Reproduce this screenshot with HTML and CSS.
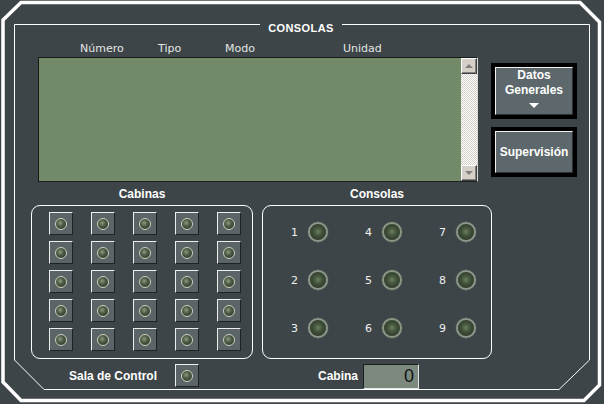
FILE: index.html
```html
<!DOCTYPE html>
<html lang="es">
<head>
<meta charset="utf-8">
<title>Consolas</title>
<link rel="stylesheet" href="styles.css">
</head>
<body>
<div class="screen">
  <svg class="frame" width="604" height="404" viewBox="0 0 604 404" aria-hidden="true">
    <polygon points="21,2.5 580,2.5 599.5,22 599.5,385 584,400.5 21,400.5 3,382 3,20" fill="none" stroke="#ffffff" stroke-width="3.5"/>
    <polygon points="14.5,24.5 589.5,24.5 589.5,360 559,389.5 44,389.5 14.5,360" fill="none" stroke="#ffffff" stroke-width="1"/>
  </svg>
  <div class="content">
    <div class="title-row"><span class="title">CONSOLAS</span></div>
    <div class="headers">
      <span class="h-num">Número</span><span class="h-tipo">Tipo</span><span class="h-modo">Modo</span><span>Unidad</span>
    </div>
    <div class="main">
      <div class="list">
        <div class="list-body"></div>
        <div class="scrollbar">
          <div class="sb-btn"><span class="arr-up"></span></div>
          <div class="sb-track"></div>
          <div class="sb-btn"><span class="arr-down"></span></div>
        </div>
      </div>
      <div class="side">
        <div class="btn-outer">
          <div class="btn btn-datos">Datos<br>Generales<span class="tri"></span></div>
        </div>
        <div class="btn-outer">
          <div class="btn btn-sup">Supervisión</div>
        </div>
      </div>
    </div>
    <div class="panels">
      <div class="panel panel-cab">
        <div class="panel-label">Cabinas</div>
        <div class="box cab-box">
          <div class="cab"><span class="led"></span></div><div class="cab"><span class="led"></span></div><div class="cab"><span class="led"></span></div><div class="cab"><span class="led"></span></div><div class="cab"><span class="led"></span></div>
          <div class="cab"><span class="led"></span></div><div class="cab"><span class="led"></span></div><div class="cab"><span class="led"></span></div><div class="cab"><span class="led"></span></div><div class="cab"><span class="led"></span></div>
          <div class="cab"><span class="led"></span></div><div class="cab"><span class="led"></span></div><div class="cab"><span class="led"></span></div><div class="cab"><span class="led"></span></div><div class="cab"><span class="led"></span></div>
          <div class="cab"><span class="led"></span></div><div class="cab"><span class="led"></span></div><div class="cab"><span class="led"></span></div><div class="cab"><span class="led"></span></div><div class="cab"><span class="led"></span></div>
          <div class="cab"><span class="led"></span></div><div class="cab"><span class="led"></span></div><div class="cab"><span class="led"></span></div><div class="cab"><span class="led"></span></div><div class="cab"><span class="led"></span></div>
        </div>
      </div>
      <div class="panel panel-con">
        <div class="panel-label">Consolas</div>
        <div class="box con-box">
          <div class="con"><span class="num">1</span><span class="led-big"></span></div>
          <div class="con"><span class="num">4</span><span class="led-big"></span></div>
          <div class="con"><span class="num">7</span><span class="led-big"></span></div>
          <div class="con"><span class="num">2</span><span class="led-big"></span></div>
          <div class="con"><span class="num">5</span><span class="led-big"></span></div>
          <div class="con"><span class="num">8</span><span class="led-big"></span></div>
          <div class="con"><span class="num">3</span><span class="led-big"></span></div>
          <div class="con"><span class="num">6</span><span class="led-big"></span></div>
          <div class="con"><span class="num">9</span><span class="led-big"></span></div>
        </div>
      </div>
    </div>
    <div class="bottom">
      <span class="sala">Sala de Control</span>
      <div class="cab"><span class="led"></span></div>
      <span class="cabina-label">Cabina</span>
      <div class="cabina-input">0</div>
    </div>
  </div>
</div>
</body>
</html>
```

FILE: styles.css
```css
html, body {
  margin: 0;
  padding: 0;
  background: #3d4548;
}

.screen {
  position: relative;
  width: 604px;
  height: 404px;
  overflow: hidden;
  background: #3d4548;
  color: #ffffff;
  font-family: "Liberation Sans", Arial, sans-serif;
}

.frame {
  position: absolute;
  left: 0;
  top: 0;
}

.content {
  position: relative;
  z-index: 1;
  display: flex;
  flex-direction: column;
  padding-top: 18px;
}

.title-row {
  height: 14px;
  text-align: center;
  padding-right: 2px;
}

.title {
  display: inline-block;
  padding: 0 8px;
  background: #3d4548;
  font-size: 11px;
  font-weight: bold;
  letter-spacing: 0.4px;
  line-height: 14px;
}

.headers {
  display: flex;
  margin-top: 10px;
  margin-left: 80px;
  height: 13px;
  font-family: "DejaVu Sans", sans-serif;
  font-size: 11px;
  line-height: 13px;
  color: #e4e6e6;
}

.h-num { width: 78px; }
.h-tipo { width: 67px; }
.h-modo { width: 118px; }

.main {
  display: flex;
  margin-top: 2px;
  margin-left: 38px;
}

.list {
  display: flex;
  width: 438px;
  height: 123px;
  border-top: 1px solid #161b1a;
  border-left: 1px solid #161b1a;
  border-bottom: 1px solid #1c2120;
  border-right: 1px solid #d8d8d8;
}

.list-body {
  flex: 1;
  background: #728a68;
}

.scrollbar {
  width: 16px;
  display: flex;
  flex-direction: column;
}

.sb-btn {
  box-sizing: border-box;
  width: 16px;
  height: 16px;
  background: #d4d0c8;
  border: 1px solid;
  border-color: #ffffff #404040 #404040 #ffffff;
  box-shadow: inset -1px -1px 0 #808080;
  display: flex;
  align-items: center;
  justify-content: center;
}

.arr-up {
  width: 0;
  height: 0;
  border-left: 4px solid transparent;
  border-right: 4px solid transparent;
  border-bottom: 4px solid #808080;
}

.arr-down {
  width: 0;
  height: 0;
  border-left: 4px solid transparent;
  border-right: 4px solid transparent;
  border-top: 4px solid #808080;
}

.sb-track {
  flex: 1;
  background-color: #ffffff;
  background-image: repeating-conic-gradient(#d4d0c8 0 25%, #ffffff 0 50%);
  background-size: 2px 2px;
}

.side {
  display: flex;
  flex-direction: column;
  gap: 8px;
  margin-top: 6px;
  margin-left: 13px;
}

.btn-outer {
  background: #000000;
  padding: 4px;
}

.btn {
  box-sizing: border-box;
  width: 78px;
  background: #5d686c;
  border: 1px solid;
  border-color: #f2f2f2 #2a2f30 #2a2f30 #f2f2f2;
  color: #ffffff;
  font-size: 12px;
  font-weight: bold;
  text-align: center;
}

.btn-datos {
  height: 48px;
  line-height: 15px;
}

.tri {
  display: block;
  width: 0;
  height: 0;
  margin: 5px auto 0;
  border-left: 5px solid transparent;
  border-right: 5px solid transparent;
  border-top: 5px solid #ffffff;
}

.btn-sup {
  height: 42px;
  display: flex;
  align-items: center;
  justify-content: center;
}

.panels {
  display: flex;
  gap: 9px;
  margin-top: 5px;
  margin-left: 31px;
}

.panel {
  display: flex;
  flex-direction: column;
}

.panel-cab { width: 222px; }
.panel-con { width: 230px; }

.panel-label {
  height: 14px;
  line-height: 14px;
  font-size: 12px;
  font-weight: bold;
  text-align: center;
  margin-bottom: 4px;
}

.box {
  box-sizing: border-box;
  height: 154px;
  border: 1px solid #ffffff;
  border-radius: 9px;
}

.cab-box {
  display: grid;
  grid-template-columns: repeat(5, 24px);
  grid-auto-rows: 23px;
  column-gap: 18px;
  row-gap: 6px;
  padding: 6px 0 0 17px;
}

.cab {
  box-sizing: border-box;
  width: 24px;
  height: 23px;
  background: #5b6568;
  border: 1px solid;
  border-color: #eeeeee #1e2222 #1e2222 #eeeeee;
  display: flex;
  align-items: center;
  justify-content: center;
}

.led {
  box-sizing: border-box;
  width: 12px;
  height: 12px;
  border-radius: 50%;
  border: 1px solid #cdd1bd;
  background: radial-gradient(circle at 42% 40%, #8c9a7c 0, #4c5b45 40%, #232c20 100%);
}

.con-box {
  display: grid;
  grid-template-columns: repeat(3, 74px);
  grid-auto-rows: 20px;
  row-gap: 28px;
  padding: 16px 0 0 27px;
}

.con {
  display: flex;
  align-items: center;
}

.num {
  width: 8px;
  margin-right: 10px;
  text-align: right;
  font-family: "DejaVu Sans", sans-serif;
  font-size: 11px;
  line-height: 13px;
  color: #f0f0f0;
}

.led-big {
  box-sizing: border-box;
  width: 20px;
  height: 20px;
  border-radius: 50%;
  border: 2px solid #8d9789;
  background: radial-gradient(circle at 50% 48%, #6a7f5e 0, #44553d 35%, #1f281b 100%);
  box-shadow: 0 0 0 0.5px #5d6560;
}

.bottom {
  display: flex;
  align-items: flex-start;
  margin-top: 5px;
  margin-left: 69px;
}

.sala,
.cabina-label {
  font-size: 12px;
  font-weight: bold;
  line-height: 14px;
  margin-top: 5px;
}

.sala {
  width: 106px;
}

.cabina-label {
  width: 159px;
  padding-right: 5px;
  text-align: right;
}

.cabina-input {
  box-sizing: border-box;
  width: 56px;
  height: 25px;
  background: #7b897e;
  border: 1px solid;
  border-color: #1a1e1e #e4e4e4 #e4e4e4 #1a1e1e;
  color: #111111;
  font-size: 18px;
  line-height: 22px;
  text-align: right;
  padding-right: 4px;
}
```
